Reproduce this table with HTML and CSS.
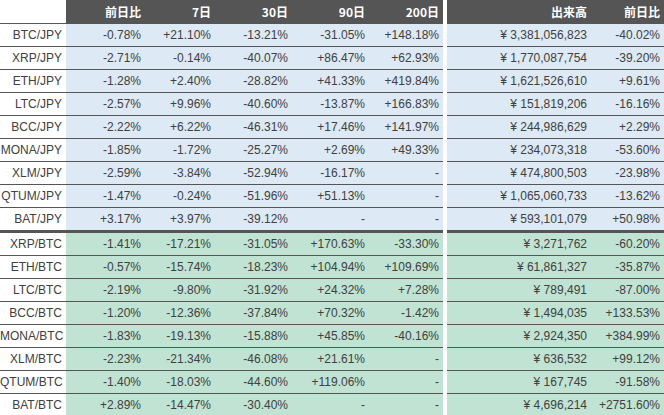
FILE: index.html
```html
<!DOCTYPE html>
<html lang="ja">
<head>
<meta charset="utf-8">
<link rel="stylesheet" href="styles.css">
</head>
<body>
<table class="rates">
  <colgroup>
    <col class="c-pair"><col class="c-d1"><col class="c-d7"><col class="c-d30"><col class="c-d90"><col class="c-d200"><col class="c-gap"><col class="c-vol"><col class="c-vd">
  </colgroup>
  <thead>
    <tr>
      <th class="blank"></th>
      <th>前日比</th><th>7日</th><th>30日</th><th>90日</th><th>200日</th>
      <th class="gap"></th>
      <th>出来高</th><th>前日比</th>
    </tr>
  </thead>
  <tbody class="jpy">
    <tr><td class="pair">BTC/JPY</td><td>-0.78%</td><td>+21.10%</td><td>-13.21%</td><td>-31.05%</td><td>+148.18%</td><td class="gap"></td><td>¥ 3,381,056,823</td><td>-40.02%</td></tr>
    <tr><td class="pair">XRP/JPY</td><td>-2.71%</td><td>-0.14%</td><td>-40.07%</td><td>+86.47%</td><td>+62.93%</td><td class="gap"></td><td>¥ 1,770,087,754</td><td>-39.20%</td></tr>
    <tr><td class="pair">ETH/JPY</td><td>-1.28%</td><td>+2.40%</td><td>-28.82%</td><td>+41.33%</td><td>+419.84%</td><td class="gap"></td><td>¥ 1,621,526,610</td><td>+9.61%</td></tr>
    <tr><td class="pair">LTC/JPY</td><td>-2.57%</td><td>+9.96%</td><td>-40.60%</td><td>-13.87%</td><td>+166.83%</td><td class="gap"></td><td>¥ 151,819,206</td><td>-16.16%</td></tr>
    <tr><td class="pair">BCC/JPY</td><td>-2.22%</td><td>+6.22%</td><td>-46.31%</td><td>+17.46%</td><td>+141.97%</td><td class="gap"></td><td>¥ 244,986,629</td><td>+2.29%</td></tr>
    <tr><td class="pair">MONA/JPY</td><td>-1.85%</td><td>-1.72%</td><td>-25.27%</td><td>+2.69%</td><td>+49.33%</td><td class="gap"></td><td>¥ 234,073,318</td><td>-53.60%</td></tr>
    <tr><td class="pair">XLM/JPY</td><td>-2.59%</td><td>-3.84%</td><td>-52.94%</td><td>-16.17%</td><td>-</td><td class="gap"></td><td>¥ 474,800,503</td><td>-23.98%</td></tr>
    <tr><td class="pair">QTUM/JPY</td><td>-1.47%</td><td>-0.24%</td><td>-51.96%</td><td>+51.13%</td><td>-</td><td class="gap"></td><td>¥ 1,065,060,733</td><td>-13.62%</td></tr>
    <tr class="last"><td class="pair">BAT/JPY</td><td>+3.17%</td><td>+3.97%</td><td>-39.12%</td><td>-</td><td>-</td><td class="gap"></td><td>¥ 593,101,079</td><td>+50.98%</td></tr>
  </tbody>
  <tbody class="btc">
    <tr><td class="pair">XRP/BTC</td><td>-1.41%</td><td>-17.21%</td><td>-31.05%</td><td>+170.63%</td><td>-33.30%</td><td class="gap"></td><td>¥ 3,271,762</td><td>-60.20%</td></tr>
    <tr><td class="pair">ETH/BTC</td><td>-0.57%</td><td>-15.74%</td><td>-18.23%</td><td>+104.94%</td><td>+109.69%</td><td class="gap"></td><td>¥ 61,861,327</td><td>-35.87%</td></tr>
    <tr><td class="pair">LTC/BTC</td><td>-2.19%</td><td>-9.80%</td><td>-31.92%</td><td>+24.32%</td><td>+7.28%</td><td class="gap"></td><td>¥ 789,491</td><td>-87.00%</td></tr>
    <tr><td class="pair">BCC/BTC</td><td>-1.20%</td><td>-12.36%</td><td>-37.84%</td><td>+70.32%</td><td>-1.42%</td><td class="gap"></td><td>¥ 1,494,035</td><td>+133.53%</td></tr>
    <tr><td class="pair">MONA/BTC</td><td>-1.83%</td><td>-19.13%</td><td>-15.88%</td><td>+45.85%</td><td>-40.16%</td><td class="gap"></td><td>¥ 2,924,350</td><td>+384.99%</td></tr>
    <tr><td class="pair">XLM/BTC</td><td>-2.23%</td><td>-21.34%</td><td>-46.08%</td><td>+21.61%</td><td>-</td><td class="gap"></td><td>¥ 636,532</td><td>+99.12%</td></tr>
    <tr><td class="pair">QTUM/BTC</td><td>-1.40%</td><td>-18.03%</td><td>-44.60%</td><td>+119.06%</td><td>-</td><td class="gap"></td><td>¥ 167,745</td><td>-91.58%</td></tr>
    <tr><td class="pair">BAT/BTC</td><td>+2.89%</td><td>-14.47%</td><td>-30.40%</td><td>-</td><td>-</td><td class="gap"></td><td>¥ 4,696,214</td><td>+2751.60%</td></tr>
  </tbody>
</table>
</body>
</html>
```

FILE: styles.css
```css
html, body {
  margin: 0;
  padding: 0;
  background: #ffffff;
}

.rates {
  width: 664px;
  table-layout: fixed;
  border-collapse: collapse;
  font-family: "Liberation Sans", "Noto Sans CJK JP", sans-serif;
  font-size: 12px;
  color: #404040;
}

.c-pair { width: 66px; }
.c-d1 { width: 79px; }
.c-d7 { width: 70px; }
.c-d30 { width: 77px; }
.c-d90 { width: 77px; }
.c-d200 { width: 74px; }
.c-gap { width: 4px; }
.c-vol { width: 144px; }
.c-vd { width: 73px; }

.rates th {
  height: 23px;
  padding: 0 4px 0 0;
  background: #555555;
  color: #ffffff;
  font-family: "Noto Sans CJK JP", sans-serif;
  font-weight: bold;
  font-size: 12px;
  text-align: right;
}

.rates th.blank {
  background: #ffffff;
  border-bottom: 1px solid #555555;
}

.rates th.gap {
  background: #ffffff;
}

.rates td {
  height: 22px;
  padding: 0 4px 0 0;
  text-align: right;
  white-space: nowrap;
  border-bottom: 1px solid #555555;
}

.rates td.pair {
  background: #ffffff;
  padding-right: 4px;
}

.rates td.gap {
  background: #ffffff;
  border-bottom: none;
  padding: 0;
}

.jpy td { background: #dde9f5; }
.btc td { background: #c0e3d3; }

.jpy tr.last td {
  border-bottom: 3px solid #555555;
}
.jpy tr.last td.gap {
  border-bottom: none;
}
```
